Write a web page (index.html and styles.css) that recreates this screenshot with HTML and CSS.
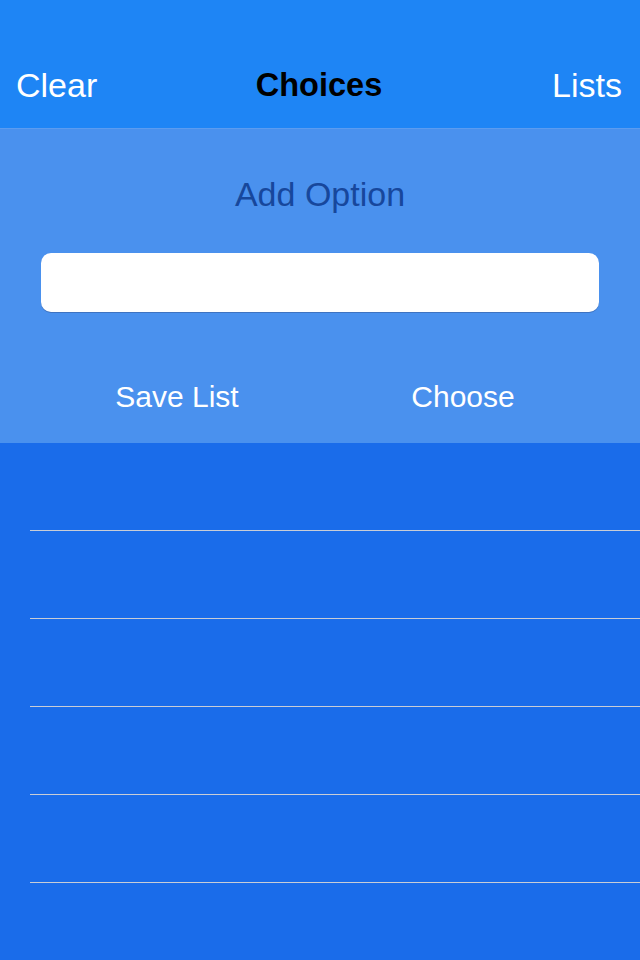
FILE: index.html
```html
<!DOCTYPE html>
<html>
<head>
<meta charset="utf-8">
<link rel="stylesheet" href="styles.css">
</head>
<body>
<div class="app">
  <header class="nav">
    <span class="nav-btn nav-left">Clear</span>
    <span class="nav-title">Choices</span>
    <span class="nav-btn nav-right">Lists</span>
  </header>
  <section class="panel">
    <div class="panel-title">Add Option</div>
    <div class="field"></div>
    <div class="actions">
      <span class="action">Save List</span>
      <span class="action">Choose</span>
    </div>
  </section>
  <ul class="list">
    <li class="row"></li>
    <li class="row"></li>
    <li class="row"></li>
    <li class="row"></li>
    <li class="row"></li>
    <li class="row"></li>
  </ul>
</div>
</body>
</html>
```
FILE: styles.css
```css
* { box-sizing: border-box; }
html, body { margin: 0; padding: 0; }
body {
  width: 640px;
  height: 960px;
  overflow: hidden;
  font-family: "Liberation Sans", Arial, sans-serif;
  background: #1a6cea;
}
.app { width: 640px; height: 960px; display: flex; flex-direction: column; }
.app > * { flex-shrink: 0; }
.nav {
  height: 128px;
  background: #1e85f5;
  padding: 65px 18px 0 16px;
  display: grid;
  grid-template-columns: 1fr auto 1fr;
  align-items: start;
}
.nav-btn { color: #fff; font-size: 34px; line-height: 40px; }
.nav-left { justify-self: start; }
.nav-right { justify-self: end; }
.nav-title { color: #000; font-size: 32.5px; font-weight: bold; line-height: 40px; }
.panel {
  height: 315px;
  background: #4a91ee;
  border-top: 1px solid #5b9cf0;
  padding-top: 45px;
  display: flex;
  flex-direction: column;
  align-items: center;
}
.panel-title { color: #17479c; font-size: 34px; line-height: 40px; }
.field {
  margin-top: 39px;
  width: 558px;
  height: 59px;
  background: #fff;
  border-radius: 10px;
  box-shadow: 0 1px 0 rgba(40, 60, 110, 0.35);
}
.actions {
  margin-top: 65px;
  width: 100%;
  padding: 0 34px;
  display: grid;
  grid-template-columns: 1fr 1fr;
}
.action { color: #fff; font-size: 30px; line-height: 40px; text-align: center; }
.list { list-style: none; margin: 0; padding: 0 0 0 30px; }
.row { height: 88px; border-top: 1px solid #c9cdd6; }
.row:first-child { height: 87px; border-top: none; }
```
